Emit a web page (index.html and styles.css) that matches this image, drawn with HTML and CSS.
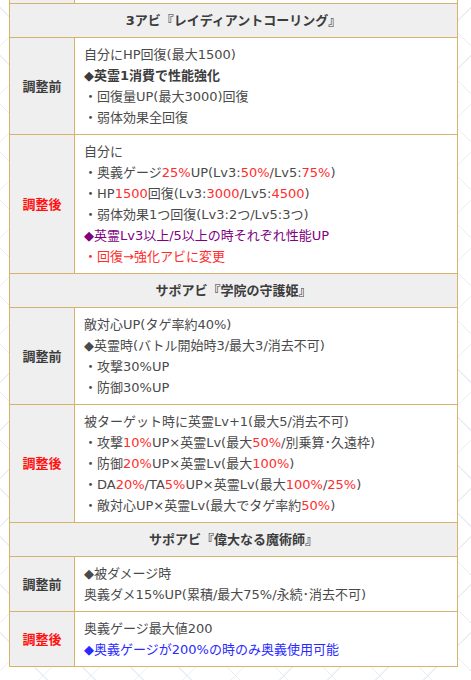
FILE: index.html
```html
<!DOCTYPE html>
<html lang="ja">
<head>
<meta charset="utf-8">
<link rel="stylesheet" href="styles.css">
</head>
<body>
<table class="tbl">
  <tr class="filler"><td class="label"></td><td class="body"></td></tr>
  <tr><th class="head" colspan="2">3アビ『レイディアントコーリング』</th></tr>
  <tr>
    <td class="label">調整前</td>
    <td class="body">自分にHP回復(最大1500)<br><b>◆英霊1消費で性能強化</b><br>・回復量UP(最大3000)回復<br>・弱体効果全回復</td>
  </tr>
  <tr>
    <td class="label after">調整後</td>
    <td class="body">自分に<br>・奥義ゲージ<span class="r">25%</span>UP(Lv3:<span class="r">50%</span>/Lv5:<span class="r">75%</span>)<br>・HP<span class="r">1500</span>回復(Lv3:<span class="r">3000</span>/Lv5:<span class="r">4500</span>)<br>・弱体効果1つ回復(Lv3:2つ/Lv5:3つ)<br><span class="p">◆英霊Lv3以上/5以上の時それぞれ性能UP</span><br><span class="r">・回復→強化アビに変更</span></td>
  </tr>
  <tr><th class="head" colspan="2">サポアビ『学院の守護姫』</th></tr>
  <tr>
    <td class="label">調整前</td>
    <td class="body">敵対心UP(タゲ率約40%)<br>◆英霊時(バトル開始時3/最大3/消去不可)<br>・攻撃30%UP<br>・防御30%UP</td>
  </tr>
  <tr>
    <td class="label after">調整後</td>
    <td class="body">被ターゲット時に英霊Lv+1(最大5/消去不可)<br>・攻撃<span class="r">10%</span>UP×英霊Lv(最大<span class="r">50%</span>/別乗算･久遠枠)<br>・防御<span class="r">20%</span>UP×英霊Lv(最大<span class="r">100%</span>)<br>・DA<span class="r">20%</span>/TA<span class="r">5%</span>UP×英霊Lv(最大<span class="r">100%</span>/<span class="r">25%</span>)<br>・敵対心UP×英霊Lv(最大でタゲ率約<span class="r">50%</span>)</td>
  </tr>
  <tr><th class="head" colspan="2">サポアビ『偉大なる魔術師』</th></tr>
  <tr>
    <td class="label">調整前</td>
    <td class="body">◆被ダメージ時<br>奥義ダメ15%UP(累積/最大75%/永続･消去不可)</td>
  </tr>
  <tr>
    <td class="label after">調整後</td>
    <td class="body">奥義ゲージ最大値200<br><span class="b">◆奥義ゲージが200%の時のみ奥義使用可能</span></td>
  </tr>
</table>
</body>
</html>
```
FILE: styles.css
```css
html, body {
  margin: 0;
  padding: 0;
}
body {
  background-color: #fff;
  background-image:
    repeating-linear-gradient(45deg, transparent 0, transparent 33px, #e9eef2 33px, #e9eef2 34px),
    repeating-linear-gradient(-45deg, transparent 0, transparent 33px, #eceff2 33px, #eceff2 34px);
  font-family: "DejaVu Sans", "Noto Sans CJK JP", sans-serif;
  font-size: 13px;
  color: #4a4a4a;
  height: 680px;
  overflow: hidden;
}
.tbl {
  margin-left: 9px;
  width: 449px;
  border-collapse: collapse;
  line-height: 21px;
}
.tbl td, .tbl th {
  border: 1px solid #d6b36c;
  padding: 6px 9px;
}
.filler td {
  height: 3px;
  padding: 0;
  border-top: 0;
}
.head {
  background: #efefef;
  font-weight: bold;
  color: #3c3c3c;
  text-align: center;
}
.label {
  width: 46px;
  background: #efefef;
  font-weight: bold;
  color: #3c3c3c;
  text-align: center;
}
.label.after {
  color: #ff1010;
}
.body {
  background: #fff;
  text-align: left;
}
.body b {
  color: #3c3c3c;
}
.r { color: #ff2d2d; }
.p { color: #800080; }
.b { color: #2a2aff; }
```
